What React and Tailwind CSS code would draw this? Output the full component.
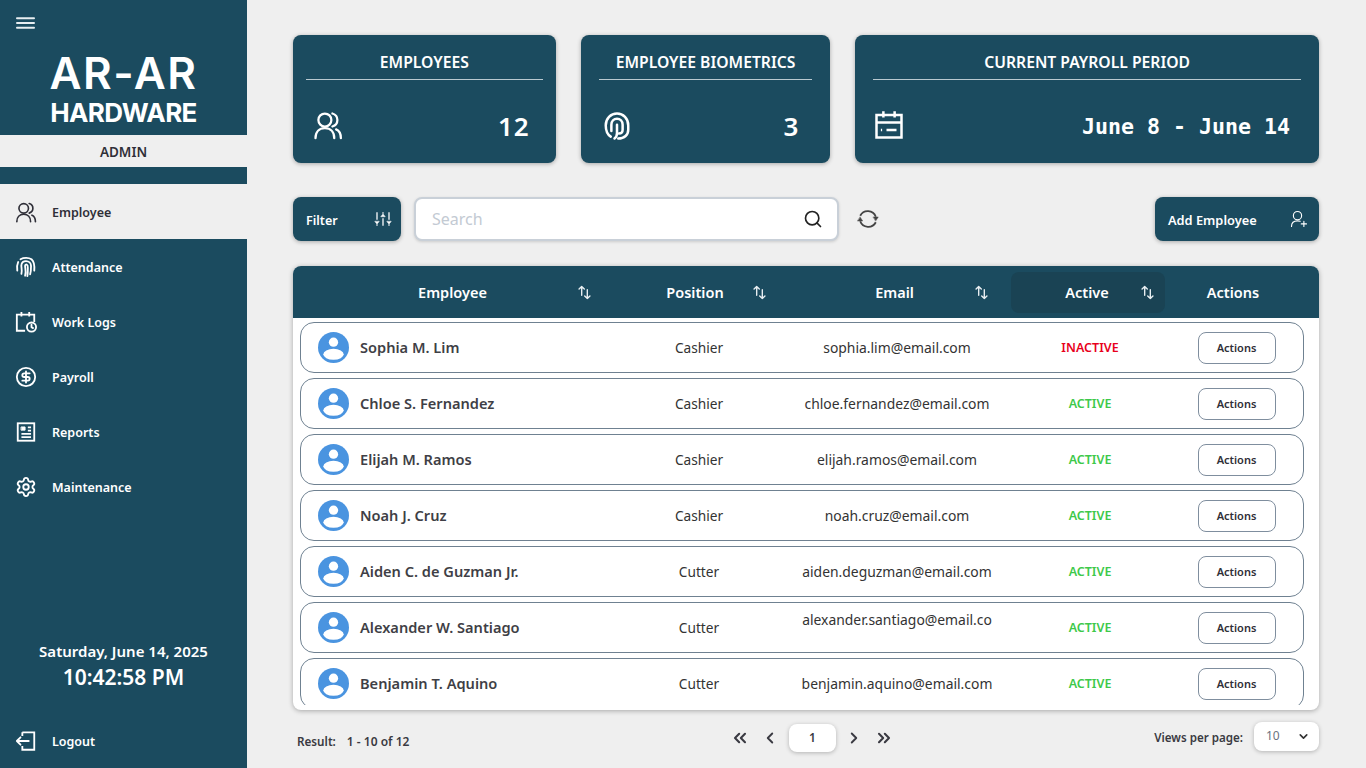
import React from "react";
import { Search, ChevronsLeft, ChevronLeft, ChevronRight, ChevronsRight, ChevronDown, Settings, CircleDollarSign } from "lucide-react";

const Svg = ({ className, children, sw = 1.8 }) => (
  <svg viewBox="0 0 24 24" fill="none" stroke="currentColor" strokeWidth={sw} strokeLinecap="round" strokeLinejoin="round" className={className}>{children}</svg>
);
const UsersIcon = ({ className }) => (
  <Svg className={className}>
    <circle cx="9.5" cy="8" r="5.2" />
    <path d="M2 22.5c0-5 3-8 7.5-8s7.5 3 7.5 8" />
    <path d="M15.5 2.8c2.6.8 4 2.8 4 5.2s-1.4 4.4-4 5.2" />
    <path d="M18.5 15.5c2.4 1 3.8 3.6 3.8 7" />
  </Svg>
);
const NavPrint = ({ className }) => (
  <Svg className={className} sw={2}>
    <path d="M2.500 16c-.5-4-.2-7 1-9.500" />
    <path d="M6 3.500c3.500-2 9-2 12 0 3 2.500 3.500 6.500 3 12.500" />
    <path d="M7 19.500c1.200-4-.5-7.500 0-10 .5-3 3-4 5-4 3 0 5.500 2 5.500 5.500 0 3 0 6-1 9" />
    <path d="M11 21.500c1.500-4 0-8.500 0-10.500 0-1.500 1-2 2-1.500s1 1.500 1 3.500c0 3 0 6-.5 9" />
  </Svg>
);
const CardPrint = ({ className }) => (
  <Svg className={className} sw={2}>
    <path d="M7 20.500C4 18.500 3 15.500 3 11.500 3 6 7 2 12 2s9 4 9 9.500V15c0 4-3 7-8 7" />
    <path d="M7.500 16v-5c0-3 2-4.800 4.500-4.800s4.500 1.800 4.500 4.800v4c0 2-1.200 3-3 3" />
    <path d="M12 11v6.500c0 2-.8 3.500-2 4.500" />
  </Svg>
);
const WorkLogs = ({ className }) => (
  <Svg className={className} sw={2}>
    <path d="M11 21.500H2V4h19v8" strokeLinecap="butt" strokeLinejoin="miter" />
    <path d="M7 1v5M15.500 1v5" strokeLinecap="butt" />
    <circle cx="18" cy="17.500" r="5" />
    <path d="M18 15v2.700l1.700 1" />
  </Svg>
);
const ReportsIcon = ({ className }) => (
  <Svg className={className} sw={2}>
    <rect x="3" y="2.500" width="18" height="19" strokeLinejoin="miter" />
    <rect x="7" y="6.500" width="4" height="3.500" fill="currentColor" strokeWidth="1" />
    <path d="M14 7h3.500M14 10.500h3.500M7 14h10.500M7 17.500h10.500" strokeLinecap="butt" />
  </Svg>
);
const LogoutIcon = ({ className }) => (
  <Svg className={className} sw={2}>
    <path d="M8 2.500h13v19H8v-4M8 6.500v-4" strokeLinecap="butt" strokeLinejoin="miter" />
    <path d="M15 12H2M6 8l-4 4 4 4" />
  </Svg>
);
const CalendarIcon = ({ className }) => (
  <Svg className={className} sw={2}>
    <rect x="2" y="4" width="20" height="18" strokeLinejoin="miter" />
    <path d="M7.500 1v5M16.500 1v5M2 10h20M5.500 16h1M10 16h8" strokeLinecap="butt" />
  </Svg>
);
const FilterIcon = ({ className }) => (
  <Svg className={className} sw={1.7}>
    <path d="M4 3v10M4 19v2M12 3v2M12 11v10M20 3v10M20 19v2" strokeLinecap="butt" />
    <path d="M1.500 15.500 4 18.500l2.500-3zM9.500 8.500 12 5.500l2.500 3zM17.500 15.500l2.500 3 2.500-3z" fill="currentColor" strokeWidth="1" />
  </Svg>
);
const RefreshIcon = ({ className }) => (
  <Svg className={className} sw={2}>
    <path d="M3.500 8.500A9.300 9.300 0 0 1 20.500 9.500" strokeLinecap="butt" />
    <path d="M20.500 15.500A9.300 9.300 0 0 1 3.500 14.500" strokeLinecap="butt" />
    <path d="M17.800 9.800h5.400L20.500 14z" fill="currentColor" strokeWidth="0.500" />
    <path d="M.8 14.200h5.400L3.500 10z" fill="currentColor" strokeWidth="0.500" />
  </Svg>
);
const AddUser = ({ className }) => (
  <Svg className={className} sw={1.5}>
    <circle cx="10" cy="7.500" r="5.500" />
    <path d="M2 22c0-5 3.500-7.500 8-7.500 1.500 0 2.500.2 3.500.6" />
    <path d="M18.500 15v7M15 18.500h7" />
  </Svg>
);
const SortArrow = () => (
  <svg viewBox="0 0 16 16" fill="none" stroke="currentColor" strokeWidth="1.500" strokeLinecap="round" strokeLinejoin="round" className="w-[15px] h-[15px] text-[#e8eef1]">
    <path d="M5 11V1.500M2.200 4.200 5 1.500l2.800 2.700" />
    <path d="M11 5v9.500M8.200 11.800 11 14.500l2.800-2.700" />
  </svg>
);
const Menu = ({ className }) => (
  <svg viewBox="0 0 20 12" className={className} fill="currentColor">
    <rect x="0" y="0" width="20" height="2" rx="1" />
    <rect x="0" y="5" width="20" height="2" rx="1" />
    <rect x="0" y="10" width="20" height="2" rx="1" />
  </svg>
);
const Avatar = () => (
  <svg viewBox="0 0 32 32" className="w-[31px] h-[31px] shrink-0">
    <circle cx="16" cy="16" r="16" fill="#4a94e0" />
    <circle cx="16" cy="10.500" r="4.800" fill="#fff" />
    <ellipse cx="16" cy="23" rx="10.500" ry="5.700" fill="#fff" />
  </svg>
);

const NAV = [
  ["Attendance", NavPrint],
  ["Work Logs", WorkLogs],
  ["Payroll", CircleDollarSign],
  ["Reports", ReportsIcon],
  ["Maintenance", Settings],
];

const ROWS = [
  ["Sophia M. Lim", "Cashier", "sophia.lim@email.com", false],
  ["Chloe S. Fernandez", "Cashier", "chloe.fernandez@email.com", true],
  ["Elijah M. Ramos", "Cashier", "elijah.ramos@email.com", true],
  ["Noah J. Cruz", "Cashier", "noah.cruz@email.com", true],
  ["Aiden C. de Guzman Jr.", "Cutter", "aiden.deguzman@email.com", true],
  ["Alexander W. Santiago", "Cutter", "alexander.santiago@email.co", true],
  ["Benjamin T. Aquino", "Cutter", "benjamin.aquino@email.com", true],
];

const StatCard = ({ title, className, icon, value, valueClass }) => (
  <div className={`bg-[#1b4b5f] rounded-lg h-[128px] shrink-0 shadow-[0_1px_4px_rgba(0,0,0,0.3)] text-white flex flex-col ${className}`}>
    <div className="h-[45px] flex items-end justify-center pb-[4px] border-b border-[#b9c9d0] text-[15.700px] font-semibold">{title}</div>
    <div className="flex-1 flex items-center justify-between pt-[9px]">
      {icon}
      <div className={valueClass}>{value}</div>
    </div>
  </div>
);

export default function App() {
  return (
    <div className="w-[1366px] h-[768px] overflow-hidden flex bg-[#efefef] text-[#333] font-['Noto_Sans',sans-serif]">
      <aside className="w-[247px] shrink-0 bg-[#1b4b5f] text-white flex flex-col">
        <div className="h-[135px] relative">
          <Menu className="absolute left-[16px] top-[17px] w-[19px] h-[12px] text-[#e8eef1]" />
          <div className="pt-[47px] flex flex-col items-center leading-none font-['Inter',sans-serif]">
            <div className="text-[44px] h-[52px] leading-[52px] font-semibold tracking-[1.500px]">AR-AR</div>
            <div className="text-[26px] h-[30px] leading-[30px] font-bold tracking-[-0.600px] mt-[-1px]">HARDWARE</div>
          </div>
        </div>
        <div className="h-[32px] bg-[#efefef] text-[#2f2f38] flex items-center justify-center text-[13.500px] font-semibold"><span className="mt-[2px]">ADMIN</span></div>
        <div className="h-[17px]" />
        <div className="h-[55px] bg-[#efefef] text-[#2f2f38] flex items-center pl-[15px] gap-[15px] text-[12.500px] font-semibold">
          <UsersIcon className="w-[22px] h-[22px]" />
          <span className="mt-[4px]">Employee</span>
        </div>
        {NAV.map(([label, Icon]) => (
          <div key={label} className="h-[55px] flex items-center pl-[15px] gap-[15px] text-[12.500px] font-semibold">
            <Icon className="w-[22px] h-[22px]" strokeWidth={2} />
            <span className="mt-[4px]">{label}</span>
          </div>
        ))}
        <div className="flex-1" />
        <div className="text-center text-[15px] font-semibold leading-[20px]">Saturday, June 14, 2025</div>
        <div className="text-center text-[21px] font-semibold leading-[32px] mb-[20px]">10:42:58 PM</div>
        <div className="h-[55px] flex items-center pl-[15px] gap-[15px] text-[12.500px] font-semibold">
          <LogoutIcon className="w-[22px] h-[22px]" />
          <span className="mt-[4px]">Logout</span>
        </div>
      </aside>

      <main className="flex-1 min-w-0 pl-[46px] pr-[47px] pt-[35px] flex flex-col">
        <div className="flex gap-[25px]">
          <StatCard
            title="EMPLOYEES"
            className="w-[262.700px] px-[13px]"
            icon={<UsersIcon className="w-[30px] h-[30px] ml-[7px] mt-[-2px]" />}
            value="12"
            valueClass="text-[26px] font-semibold mr-[13px] tracking-[1px]"
          />
          <StatCard
            title="EMPLOYEE BIOMETRICS"
            className="w-[249.700px] px-[18px]"
            icon={<CardPrint className="w-[30px] h-[30px] ml-[3px]" />}
            value="3"
            valueClass="text-[26px] font-semibold mr-[14px]"
          />
          <StatCard
            title="CURRENT PAYROLL PERIOD"
            className="w-[463.600px] px-[18px]"
            icon={<CalendarIcon className="w-[30px] h-[30px] ml-[1px] mt-[-2px]" />}
            value="June 8 - June 14"
            valueClass="font-['DejaVu_Sans_Mono',monospace] text-[21.600px] font-bold mr-[11px] mt-[3px]"
          />
        </div>

        <div className="flex items-center mt-[34px] h-[44px]">
          <div className="w-[108px] h-[44px] rounded-lg bg-[#1b4b5f] text-white shadow-[0_1px_4px_rgba(0,0,0,0.3)] flex items-center justify-between pl-[13px] pr-[9px] text-[12.500px] font-semibold">
            <span className="mt-[4px]">Filter</span>
            <FilterIcon className="w-[18px] h-[18px]" />
          </div>
          <div className="w-[425px] h-[44px] ml-[13px] rounded-lg bg-white border-2 border-[#c9d0d8] shadow-[0_1px_3px_rgba(0,0,0,0.15)] flex items-center justify-between pl-[16px] pr-[14px] text-[16px] text-[#c3cad3]">
            Search
            <Search className="w-[20px] h-[20px] text-[#222]" strokeWidth={2} />
          </div>
          <RefreshIcon className="w-[22px] h-[22px] ml-[18px] text-[#444]" />
          <div className="flex-1" />
          <div className="w-[164px] h-[44px] rounded-lg bg-[#1b4b5f] text-white shadow-[0_1px_4px_rgba(0,0,0,0.3)] flex items-center justify-between pl-[13px] pr-[11px] text-[12.800px] font-semibold">
            <span className="mt-[4px]">Add Employee</span>
            <AddUser className="w-[18px] h-[18px]" />
          </div>
        </div>

        <div className="mt-[25px] h-[444px] rounded-lg bg-white shadow-[0_1px_5px_rgba(0,0,0,0.3)] overflow-hidden flex flex-col shrink-0">
          <div className="h-[52px] shrink-0 bg-[#1b4b5f] text-white text-[14.500px] font-semibold grid grid-cols-[320px_170px_227px_155px_1fr] items-center">
            <div className="relative flex justify-center pr-[1px]">
              <span className="mt-[2px]">Employee</span>
              <span className="absolute left-[284px] top-[5px]"><SortArrow /></span>
            </div>
            <div className="relative flex justify-center">
              <span className="mr-[6px] mt-[2px]">Position</span>
              <span className="absolute left-[139px] top-[5px]"><SortArrow /></span>
            </div>
            <div className="relative flex justify-center">
              <span className="mr-[4px] mt-[2px]">Email</span>
              <span className="absolute left-[191px] top-[5px]"><SortArrow /></span>
            </div>
            <div className="relative h-[41px] ml-[1px] rounded-lg bg-[#1a4354] flex items-center justify-center">
              <span className="mr-[2px] mt-[2px]">Active</span>
              <span className="absolute left-[129px] top-[13px]"><SortArrow /></span>
            </div>
            <div className="text-center pr-[18px] mt-[2px]">Actions</div>
          </div>
          <div className="h-[387px] overflow-hidden pt-[4px] pl-[7px] pr-[15px] flex flex-col gap-[5px] shrink-0">
            {ROWS.map(([name, pos, email, active], i) => (
              <div key={name} className="h-[51px] shrink-0 rounded-[14px] border border-[#6f8191] grid grid-cols-[319px_158px_238px_148px_1fr] items-center">
                <div className="flex items-center pl-[17px] gap-[11px] text-[14.600px] font-semibold text-[#3f3f46]">
                  <Avatar />
                  <span>{name}</span>
                </div>
                <div className="text-center text-[13.700px] pt-[2px]">{pos}</div>
                <div className="text-center text-[13.900px] pt-[2px]">
                  <span className={i === 5 ? "block mb-[16px]" : ""}>{email}</span>
                </div>
                <div className={`text-center text-[12.500px] font-semibold pt-[2px] ${active ? "text-[#3dc94a]" : "text-[#e8001c]"}`}>{active ? "ACTIVE" : "INACTIVE"}</div>
                <div className="flex justify-center pl-[6px]">
                  <div className="w-[78px] h-[32px] rounded-lg border border-[#7f8e9e] flex items-center justify-center text-[11px] font-semibold text-[#2f2f38] pt-[2px]">Actions</div>
                </div>
              </div>
            ))}
          </div>
        </div>

        <div className="flex-1 flex items-center text-[#3a3a42] pb-[3px]">
          <div className="w-[417px] pl-[4px] pt-[8px] text-[11.700px] font-semibold flex gap-[11px]">
            <span>Result:</span><span className="text-[12px]">1 - 10 of 12</span>
          </div>
          <div className="flex items-center">
            <ChevronsLeft className="w-[20px] h-[20px] ml-[20px]" strokeWidth={2.500} />
            <ChevronLeft className="w-[18px] h-[18px] ml-[11px]" strokeWidth={2.500} />
            <div className="w-[47px] h-[28px] ml-[10px] rounded-lg bg-white shadow-[0_1px_4px_rgba(0,0,0,0.25)] flex items-center justify-center text-[12px] font-semibold">1</div>
            <ChevronRight className="w-[18px] h-[18px] ml-[9px]" strokeWidth={2.500} />
            <ChevronsRight className="w-[20px] h-[20px] ml-[11px]" strokeWidth={2.500} />
          </div>
          <div className="flex-1" />
          <div className="text-[11.600px] font-semibold mr-[11px]">Views per page:</div>
          <div className="w-[65px] h-[29px] mb-[2px] rounded-lg bg-white shadow-[0_1px_4px_rgba(0,0,0,0.25)] flex items-center justify-between pl-[12px] pr-[9px] text-[12px] text-[#6b7280]">
            <span className="mb-[2px]">10</span>
            <ChevronDown className="w-[13px] h-[13px] text-[#333]" strokeWidth={3} />
          </div>
        </div>
      </main>
    </div>
  );
}
